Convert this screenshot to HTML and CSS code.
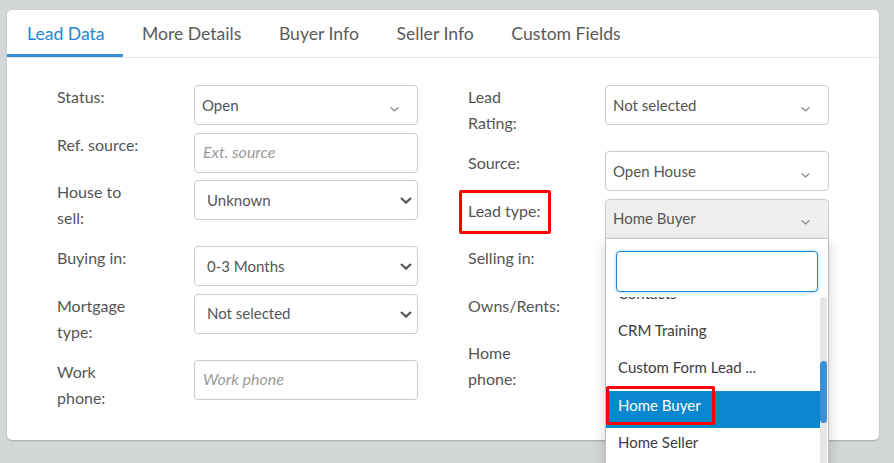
FILE: index.html
```html
<!DOCTYPE html>
<html>
<head>
<meta charset="utf-8">
<link rel="stylesheet" href="styles.css">
</head>
<body>
<div class="page">
  <div class="card">
    <nav class="tabs">
      <div class="tab active">Lead Data</div>
      <div class="tab">More Details</div>
      <div class="tab">Buyer Info</div>
      <div class="tab">Seller Info</div>
      <div class="tab">Custom Fields</div>
    </nav>
    <div class="form">
      <div class="col">
        <div class="row">
          <div class="label">Status:</div>
          <div class="field custom"><span class="val">Open</span><svg class="chev-s" width="9" height="5" viewBox="0 0 9 5"><path d="M0.6 0.6 L4.5 4 L8.4 0.6"/></svg></div>
        </div>
        <div class="row">
          <div class="label">Ref. source:</div>
          <div class="field text"><span class="ph">Ext. source</span></div>
        </div>
        <div class="row">
          <div class="label">House to sell:</div>
          <div class="field native"><span class="val">Unknown</span><svg class="chev-b" width="12" height="7" viewBox="0 0 12 7"><path d="M1 1 L6 5.6 L11 1"/></svg></div>
        </div>
        <div class="row">
          <div class="label">Buying in:</div>
          <div class="field native"><span class="val">0-3 Months</span><svg class="chev-b" width="12" height="7" viewBox="0 0 12 7"><path d="M1 1 L6 5.6 L11 1"/></svg></div>
        </div>
        <div class="row">
          <div class="label">Mortgage type:</div>
          <div class="field native"><span class="val">Not selected</span><svg class="chev-b" width="12" height="7" viewBox="0 0 12 7"><path d="M1 1 L6 5.6 L11 1"/></svg></div>
        </div>
        <div class="row">
          <div class="label">Work phone:</div>
          <div class="field text"><span class="ph">Work phone</span></div>
        </div>
      </div>
      <div class="col">
        <div class="row">
          <div class="label">Lead Rating:</div>
          <div class="field custom"><span class="val">Not selected</span><svg class="chev-s" width="9" height="5" viewBox="0 0 9 5"><path d="M0.6 0.6 L4.5 4 L8.4 0.6"/></svg></div>
        </div>
        <div class="row">
          <div class="label">Source:</div>
          <div class="field custom"><span class="val">Open House</span><svg class="chev-s" width="9" height="5" viewBox="0 0 9 5"><path d="M0.6 0.6 L4.5 4 L8.4 0.6"/></svg></div>
        </div>
        <div class="row">
          <div class="label marked">Lead type:<span class="redbox label-box"></span></div>
          <div class="field custom open"><span class="val">Home Buyer</span><svg class="chev-s" width="9" height="5" viewBox="0 0 9 5"><path d="M0.6 0.6 L4.5 4 L8.4 0.6"/></svg>
            <div class="dropdown">
              <div class="dd-search"><div class="search"></div></div>
              <div class="results">
                <div class="list">
                  <div class="list-inner">
                    <div class="item">Contacts</div>
                    <div class="item">CRM Training</div>
                    <div class="item">Custom Form Lead ...</div>
                    <div class="item selected">Home Buyer<span class="redbox item-box"></span></div>
                    <div class="item">Home Seller</div>
                  </div>
                </div>
                <div class="track"><div class="thumb"></div></div>
              </div>
            </div>
          </div>
        </div>
        <div class="row">
          <div class="label">Selling in:</div>
          <div class="field blank"></div>
        </div>
        <div class="row">
          <div class="label">Owns/Rents:</div>
          <div class="field blank"></div>
        </div>
        <div class="row">
          <div class="label">Home phone:</div>
          <div class="field blank"></div>
        </div>
      </div>
    </div>
  </div>
</div>
</body>
</html>
```
FILE: styles.css
```css
html, body {
  margin: 0;
  padding: 0;
  overflow: hidden;
  height: 100%;
}
body {
  background: #d3d7d7;
  font-family: Lato, "Open Sans", sans-serif;
  color: #555;
}
.page {
  padding: 10px 0 0 7px;
}
.card {
  width: 872px;
  height: 430px;
  box-sizing: border-box;
  background: #fff;
  border-radius: 5px;
  box-shadow: 0 1px 2px rgba(0, 0, 0, 0.22);
}
.tabs {
  display: flex;
  height: 48px;
  box-sizing: border-box;
  border-bottom: 1px solid #e6e8e8;
}
.tab {
  height: 47px;
  display: flex;
  align-items: center;
  padding: 0 18.8px;
  font-size: 17.6px;
  color: #5a5a5a;
  box-sizing: border-box;
}
.tab.active {
  padding-left: 20px;
  padding-right: 18.5px;
  color: #2188d3;
  box-shadow: inset 0 -3px 0 #3a8fd2;
}
.form {
  display: grid;
  grid-template-columns: 361px 361px;
  column-gap: 50px;
  padding: 27px 50px 0 50px;
}
.row {
  display: grid;
  grid-template-columns: 137px 224px;
  align-items: start;
  margin-bottom: 7.5px;
}
.label {
  width: 84px;
  font-size: 16px;
  line-height: 26px;
  margin-top: -1px;
  padding-bottom: 7.5px;
  color: #555;
  position: relative;
}
.field {
  height: 40px;
  box-sizing: border-box;
  border: 1px solid #cccccc;
  border-radius: 4px;
  display: flex;
  align-items: center;
  font-size: 15px;
  color: #555;
  position: relative;
  background: #fff;
  padding-bottom: 1px;
}
.field.custom .val {
  padding-left: 7px;
}
.field.native .val {
  padding-left: 12px;
}
.field.text .ph {
  padding-left: 8px;
  margin-bottom: 2px;
  font-style: italic;
  font-size: 16px;
  color: #9a9a9a;
}
.chev-s {
  margin-left: auto;
  margin-right: 18px;
  margin-top: 9px;
  fill: none;
  stroke: #8a8a8a;
  stroke-width: 1.3;
}
.chev-b {
  margin-left: auto;
  margin-right: 5px;
  margin-top: 2px;
  fill: none;
  stroke: #555;
  stroke-width: 2.2;
}
.field.open {
  background: #efefef;
  border-bottom-left-radius: 0;
  border-bottom-right-radius: 0;
}
.redbox {
  position: absolute;
  box-sizing: border-box;
  border: 3px solid #f00;
  border-radius: 2px;
  pointer-events: none;
}
.label-box {
  left: -9px;
  top: -8px;
  width: 92px;
  height: 44px;
}
.dropdown {
  position: absolute;
  top: 39px;
  left: -1px;
  right: -1px;
  background: #fff;
  border: 1px solid #bdbdbd;
  border-top: none;
  box-shadow: 0 4px 12px rgba(0, 0, 0, 0.18);
  z-index: 5;
}
.dd-search {
  padding: 12.5px 10px 4.5px 10px;
}
.search {
  height: 41px;
  box-sizing: border-box;
  border: 1px solid #1b87d3;
  border-radius: 4px;
  box-shadow: 0 0 3px rgba(27, 135, 211, 0.55);
}
.results {
  display: flex;
  height: 220px;
}
.list {
  flex: 1;
  overflow: hidden;
}
.list-inner {
  margin-top: -17.8px;
}
.item {
  position: relative;
  height: 37.4px;
  box-sizing: border-box;
  padding: 4px 0 0 12px;
  line-height: 20px;
  font-size: 15px;
  color: #3c3c3c;
}
.item.selected {
  background: #0a88cf;
  color: #fff;
}
.item-box {
  left: 0;
  top: -5px;
  width: 109px;
  height: 39px;
}
.track {
  width: 7px;
  margin-right: 1.5px;
  background: #e6e6e6;
  border-radius: 4px 4px 0 0;
}
.thumb {
  margin-top: 64.5px;
  height: 61.7px;
  background: #3d8fd0;
  border-radius: 4px;
}
```
